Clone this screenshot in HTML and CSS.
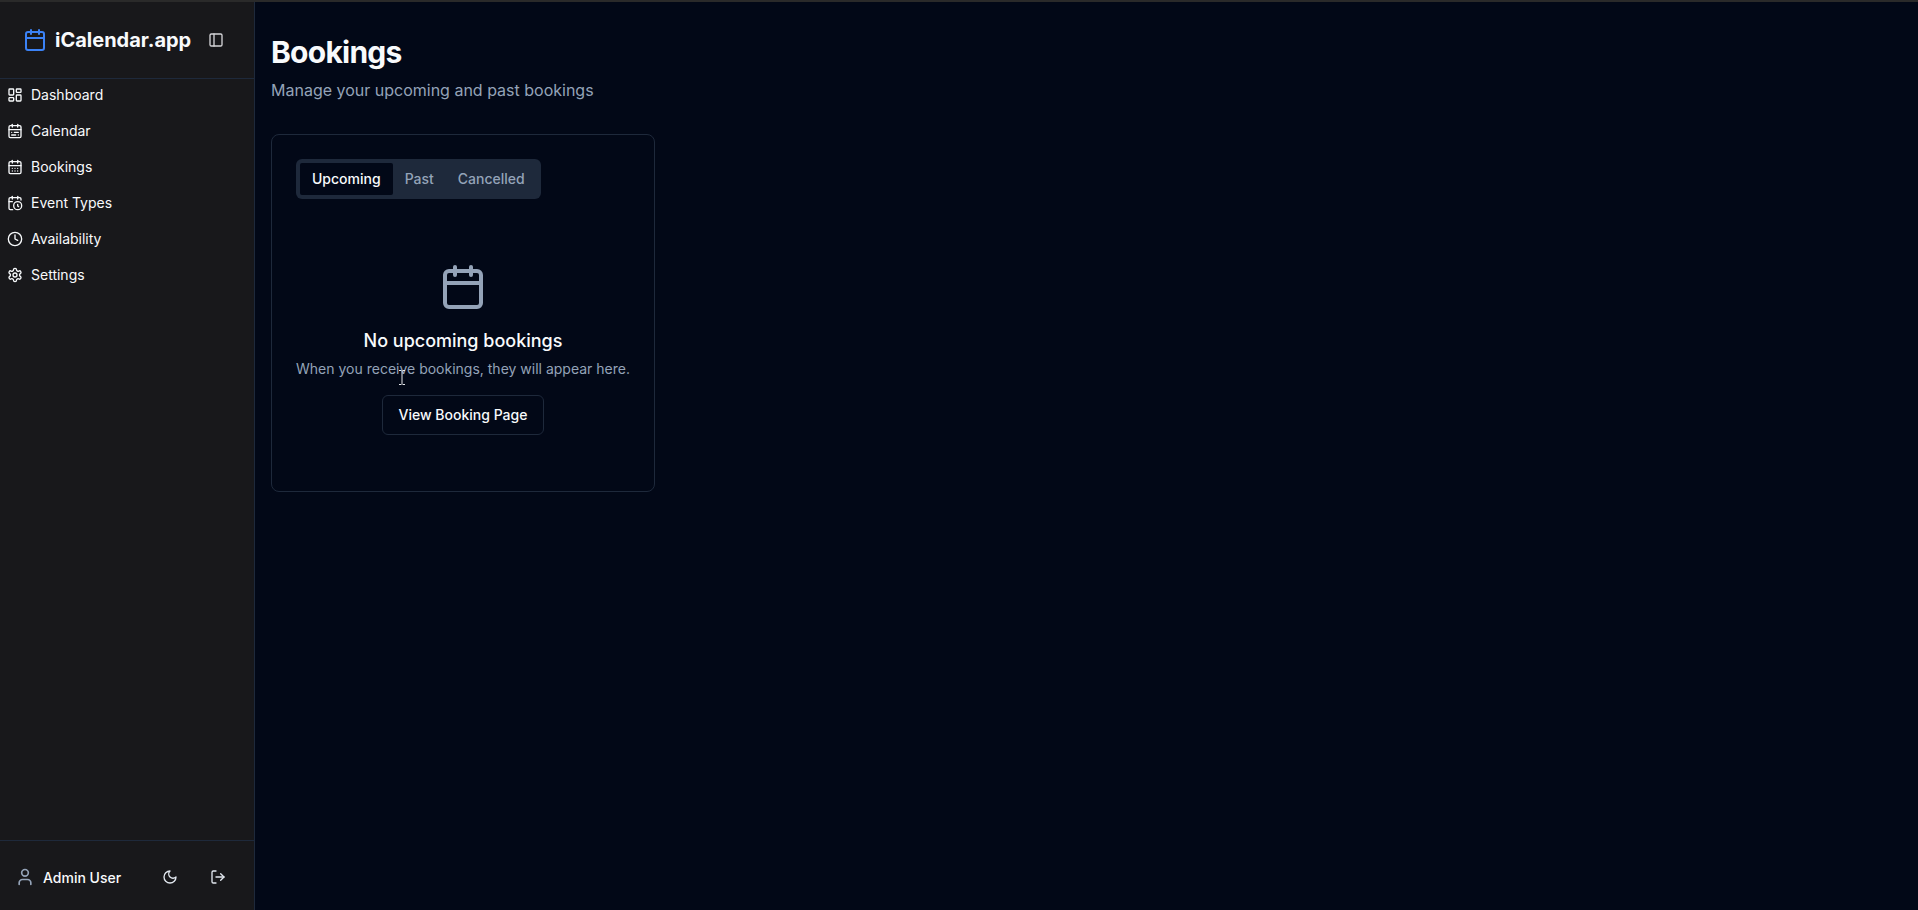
FILE: index.html
```html
<!DOCTYPE html>
<html lang="en">
<head>
    <meta charset="UTF-8">
    <meta name="viewport" content="width=device-width, initial-scale=1.0">
    <title>Bookings - iCalendar.app</title>
    <link rel="stylesheet" href="styles.css">
</head>
<body>
    <div class="app">
        <aside class="sidebar">
            <div class="brand">
                <svg class="brand-icon" viewBox="0 0 24 24"><path d="M8 2v4"/><path d="M16 2v4"/><rect x="3" y="4" width="18" height="18" rx="2"/><path d="M3 10h18"/></svg>
                <span class="brand-name">iCalendar.app</span>
                <svg class="icon toggle" viewBox="0 0 24 24"><rect x="3" y="3" width="18" height="18" rx="2"/><path d="M9 3v18"/></svg>
            </div>
            <nav class="nav">
                <a class="nav-item"><svg class="icon" viewBox="0 0 24 24"><rect x="3" y="3" width="7" height="9" rx="1"/><rect x="14" y="3" width="7" height="5" rx="1"/><rect x="14" y="12" width="7" height="9" rx="1"/><rect x="3" y="16" width="7" height="5" rx="1"/></svg>Dashboard</a>
                <a class="nav-item"><svg class="icon" viewBox="0 0 24 24"><rect x="3" y="4" width="18" height="18" rx="2"/><path d="M16 2v4"/><path d="M3 10h18"/><path d="M8 2v4"/><path d="M17 14h-6"/><path d="M13 18H7"/><path d="M7 14h.01"/><path d="M17 18h.01"/></svg>Calendar</a>
                <a class="nav-item"><svg class="icon" viewBox="0 0 24 24"><path d="M8 2v4"/><path d="M16 2v4"/><rect x="3" y="4" width="18" height="18" rx="2"/><path d="M3 10h18"/><path d="M8 14h.01"/><path d="M12 14h.01"/><path d="M16 14h.01"/><path d="M8 18h.01"/><path d="M12 18h.01"/><path d="M16 18h.01"/></svg>Bookings</a>
                <a class="nav-item"><svg class="icon" viewBox="0 0 24 24"><path d="M21 7.5V6a2 2 0 0 0-2-2H5a2 2 0 0 0-2 2v14a2 2 0 0 0 2 2h3.5"/><path d="M16 2v4"/><path d="M8 2v4"/><path d="M3 10h5"/><path d="M17.5 17.5 16 16.3V14"/><circle cx="16" cy="16" r="6"/></svg>Event Types</a>
                <a class="nav-item"><svg class="icon" viewBox="0 0 24 24"><circle cx="12" cy="12" r="10"/><polyline points="12 6 12 12 16 14"/></svg>Availability</a>
                <a class="nav-item"><svg class="icon" viewBox="0 0 24 24"><path d="M12.22 2h-.44a2 2 0 0 0-2 2v.18a2 2 0 0 1-1 1.73l-.43.25a2 2 0 0 1-2 0l-.15-.08a2 2 0 0 0-2.73.73l-.22.38a2 2 0 0 0 .73 2.73l.15.1a2 2 0 0 1 1 1.72v.51a2 2 0 0 1-1 1.74l-.15.09a2 2 0 0 0-.73 2.73l.22.38a2 2 0 0 0 2.73.73l.15-.08a2 2 0 0 1 2 0l.43.25a2 2 0 0 1 1 1.73V20a2 2 0 0 0 2 2h.44a2 2 0 0 0 2-2v-.18a2 2 0 0 1 1-1.73l.43-.25a2 2 0 0 1 2 0l.15.08a2 2 0 0 0 2.73-.73l.22-.39a2 2 0 0 0-.73-2.73l-.15-.08a2 2 0 0 1-1-1.74v-.5a2 2 0 0 1 1-1.74l.15-.09a2 2 0 0 0 .73-2.73l-.22-.38a2 2 0 0 0-2.73-.73l-.15.08a2 2 0 0 1-2 0l-.43-.25a2 2 0 0 1-1-1.73V4a2 2 0 0 0-2-2z"/><circle cx="12" cy="12" r="3"/></svg>Settings</a>
            </nav>
            <div class="sidebar-foot">
                <svg class="user-icon" viewBox="0 0 24 24"><path d="M19 21v-2a4 4 0 0 0-4-4H9a4 4 0 0 0-4 4v2"/><circle cx="12" cy="7" r="4"/></svg>
                <span class="user-name">Admin User</span>
                <svg class="icon moon" viewBox="0 0 24 24"><path d="M12 3a6 6 0 0 0 9 9 9 9 0 1 1-9-9Z"/></svg>
                <svg class="icon logout" viewBox="0 0 24 24"><path d="M9 21H5a2 2 0 0 1-2-2V5a2 2 0 0 1 2-2h4"/><polyline points="16 17 21 12 16 7"/><line x1="21" y1="12" x2="9" y2="12"/></svg>
            </div>
        </aside>
        <main class="content">
            <h1>Bookings</h1>
            <p class="subtitle">Manage your upcoming and past bookings</p>
            <section class="card">
                <div class="tabs">
                    <button class="tab active">Upcoming</button>
                    <button class="tab">Past</button>
                    <button class="tab">Cancelled</button>
                </div>
                <div class="empty">
                    <svg class="empty-icon" viewBox="0 0 24 24"><path d="M8 2v4"/><path d="M16 2v4"/><rect x="3" y="4" width="18" height="18" rx="2"/><path d="M3 10h18"/></svg>
                    <h3>No upcoming bookings</h3>
                    <p>When you receive bookings, they will appear here.</p>
                    <button class="outline-btn">View Booking Page</button>
                </div>
            </section>
        </main>
    </div>
    <!-- mouse pointer in the screenshot -->
    <svg class="cursor" width="8" height="15" viewBox="0 0 8 15"><path d="M1 .5h2.5M4.5 .5H7M4 1v13M1 14.5h2.5M4.5 14.5H7"/></svg>
</body>
</html>
```

FILE: styles.css
```css
* {
    box-sizing: border-box;
}
html, body {
    height: 100%;
}
body {
    margin: 0;
    background-color: #020817;
    color: #f8fafc;
    font-family: Inter, "Noto Sans", sans-serif;
    font-size: 14px;
    overflow: hidden;
}
svg {
    fill: none;
    stroke: currentColor;
    stroke-width: 2;
    stroke-linecap: round;
    stroke-linejoin: round;
    flex-shrink: 0;
}
.icon {
    width: 16px;
    height: 16px;
}
.app {
    display: flex;
    height: 100%;
    border-top: 2px solid #2a2a2a;
}
.sidebar {
    width: 255px;
    display: flex;
    flex-direction: column;
    background-color: #18181b;
    border-right: 1px solid #1e293b;
}
.brand {
    height: 77px;
    flex-shrink: 0;
    display: flex;
    align-items: center;
    padding: 0 23px;
    border-bottom: 1px solid #1e293b;
}
.brand-icon {
    width: 24px;
    height: 24px;
    color: #3b82f6;
}
.brand-name {
    margin-left: 8px;
    font-size: 20px;
    font-weight: 700;
    line-height: 28px;
}
.toggle {
    margin-left: 17px;
    color: #d4d4d8;
}
.nav {
    flex: 1;
    display: flex;
    flex-direction: column;
    margin-top: -3px;
}
.nav-item {
    height: 36px;
    display: flex;
    align-items: center;
    gap: 8px;
    padding-left: 7px;
    font-weight: 400;
    color: #f8fafc;
}
.nav-item .icon {
    margin-top: 2px;
}
.sidebar-foot {
    height: 70px;
    flex-shrink: 0;
    display: flex;
    align-items: center;
    padding: 3px 0 0 15px;
    border-top: 1px solid #1e293b;
}
.user-icon {
    width: 20px;
    height: 20px;
    color: #94a3b8;
}
.user-name {
    margin-left: 8px;
    font-weight: 500;
    width: 119px;
}
.moon {
    color: #e2e8f0;
}
.logout {
    margin-left: 32px;
    color: #e2e8f0;
}
.content {
    flex: 1;
    padding: 16px;
}
h1 {
    margin: 0;
    padding-top: 16px;
    font-size: 30px;
    line-height: 36px;
    font-weight: 700;
    letter-spacing: -0.75px;
}
.subtitle {
    margin: 8px 0 0;
    font-size: 16px;
    line-height: 24px;
    color: #94a3b8;
}
.card {
    width: 384px;
    height: 358px;
    margin-top: 32px;
    padding: 24px;
    border: 1px solid #1e293b;
    border-radius: 8px;
}
.tabs {
    display: inline-flex;
    height: 40px;
    padding: 4px;
    background-color: #1e293b;
    border-radius: 6px;
}
.tab {
    padding: 6px 12px;
    border: 0;
    border-radius: 2px;
    background: none;
    color: #94a3b8;
    font: 500 14px/20px Inter, sans-serif;
}
.tab.active {
    background-color: #020817;
    color: #f8fafc;
}
.empty {
    display: flex;
    flex-direction: column;
    align-items: center;
    padding-top: 64px;
    text-align: center;
}
.empty-icon {
    width: 48px;
    height: 48px;
    color: #94a3b8;
}
h3 {
    margin: 16px 0 0;
    font-size: 18px;
    line-height: 28px;
    font-weight: 500;
}
.empty p {
    margin: 4px 0 0;
    line-height: 20px;
    color: #94a3b8;
}
.outline-btn {
    height: 40px;
    margin-top: 16px;
    padding: 0 16px;
    border: 1px solid #1e293b;
    border-radius: 6px;
    background-color: #020817;
    color: #f8fafc;
    font: 500 14px/20px Inter, sans-serif;
}
.cursor {
    position: absolute;
    left: 398px;
    top: 370px;
    stroke: #e5e7eb;
    stroke-width: 1;
    stroke-linecap: butt;
}
```
